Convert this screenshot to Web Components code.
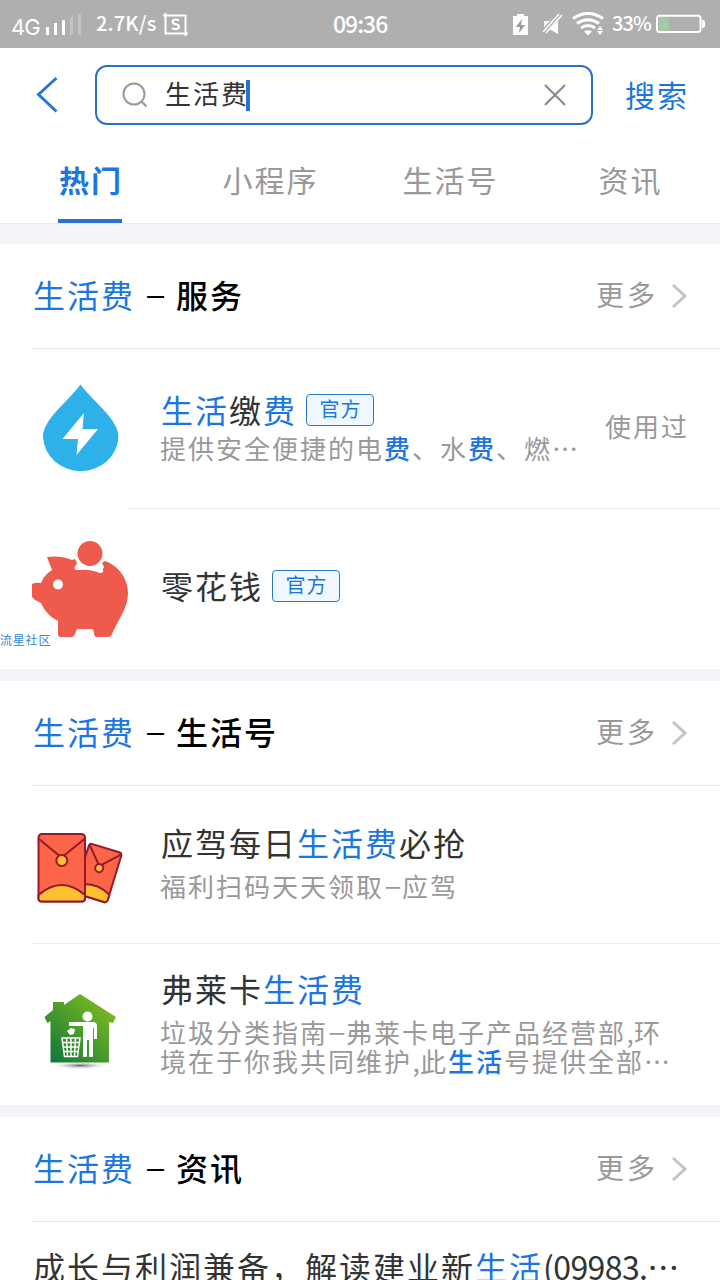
<!DOCTYPE html>
<html lang="zh-CN">
<head>
<meta charset="utf-8">
<title>生活费</title>
<style>
html,body{margin:0;height:1280px;overflow:hidden;background:#fff}
body{width:720px;font-family:"Noto Sans CJK SC",sans-serif;color:#333;--blue:#1b76e2}
</style>
</head>
<body>
<search-page></search-page>
<script>
const define = (name, html) => {
  const t = document.createElement('template');
  t.innerHTML = html;
  customElements.define(name, class extends HTMLElement {
    constructor() {
      super();
      this.attachShadow({mode: 'open'}).appendChild(t.content.cloneNode(true));
    }
  });
};

define('status-bar', `<style>
:host{display:flex;align-items:center;height:48px;background:#afafaf;color:#fff;box-sizing:border-box;white-space:nowrap;line-height:48px}
svg{display:block;flex:none}
.net{font:22px/48px Inter,sans-serif;width:28px;margin-left:11px;padding-top:3px;box-sizing:border-box;height:48px;letter-spacing:-1px}
.bars{margin-left:7px}
.speed{font:500 20px/46px "Noto Sans CJK SC",sans-serif;width:62px;margin-left:14px;height:48px;letter-spacing:.2px}
.shot{margin-left:5px}
.time{font:500 23px/46px "Noto Sans CJK SC",sans-serif;letter-spacing:-1px;margin-left:144px;width:56px;height:48px}
.bat{margin-left:123px}.mute{margin-left:13px}.wifi{margin-left:9px}
.pct{font:500 20px/46px "Noto Sans CJK SC",sans-serif;width:38px;margin-left:8px;height:48px;letter-spacing:-.9px}
.level{margin-left:6px}
</style>
<span class="net">4G</span>
<svg class="bars" width="36" height="48" fill="#fff"><path d="M0 27h3v8h-3zM8 23h3v12h-3zM16 20h3v15h-3z"/><path opacity=".25" d="M24 17h3v18h-3zM32 14h3v21h-3z"/></svg>
<span class="speed">2.7K/s</span>
<svg class="shot" width="26" height="48" fill="none" stroke="#fff" stroke-width="2"><path d="M0 15.500h22.500V36M2.500 13v20.500H25"/><path d="M16 20.500q-3.500-2-6 0-1.500 3 3 3.800 4.500 1.200 2.500 3.800-3 2-6.500 0" stroke-width="2.200"/></svg>
<span class="time">09:36</span>
<svg class="bat" width="18" height="48"><path fill="#fff" d="M1 16h4v-2h7v2h4v19H1z"/><path fill="#999" d="M10 19l-6 8h4l-1 6 6-8H9z"/></svg>
<svg class="mute" width="20" height="48"><path fill="#fff" d="M1 21h5l9-7v20l-9-5H1z"/><path stroke="#afafaf" stroke-width="6" d="M0 33L17 14"/><path stroke="#fff" stroke-width="1.600" d="M0 32L16 14M3 33L19 15"/></svg>
<svg class="wifi" width="32" height="48" fill="none" stroke="#fff" stroke-width="3"><path d="M1 18.500q15-10 30 0M5 23.500q11-7.500 22 0M9 28q7-5 14 0"/><path fill="#fff" stroke="none" d="M12 31.500q4-2.500 8 0l-4 4zM28 26l3 4h-6zM28 35l3-4h-6z"/></svg>
<span class="pct">33%</span>
<svg class="level" width="50" height="48"><rect x="3" y="17" width="10" height="14" fill="#a3c9a7"/><rect x="1" y="15.800" width="43.500" height="16.200" rx="2.500" fill="none" stroke="#fff" stroke-width="2"/><path fill="#fff" d="M46 20h1.500l1.500 1.500v5l-1.500 1.500H46z"/></svg>`);

define('search-header', `<style>
:host{display:flex;align-items:center;height:92px;padding:2px 0 0 35px;box-sizing:border-box}
svg{display:block;flex:none}
.back{margin-right:36px}
.box{display:flex;align-items:center;width:498px;height:60px;border:2px solid #2b70cb;border-radius:12px;box-sizing:border-box;padding:0 24px 0 25px}
.q{margin-left:16px;font-size:26px;letter-spacing:2px;line-height:54px;height:58px;color:#333}
.caret{width:4px;height:31px;background:#2b70cb;margin-left:-3px}
.clear{margin-left:auto}
.go{margin-left:32px;font-size:30px;letter-spacing:2px;color:var(--blue);padding-bottom:2px}
</style>
<svg class="back" width="24" height="40" fill="none" stroke="#2476d8" stroke-width="3"><path d="M21.500 3L3.500 19.500l18 17"/></svg>
<div class="box">
<svg width="27" height="30" fill="none" stroke="#999" stroke-width="2"><circle cx="12" cy="14" r="10.500"/><path d="M19.500 21.500l5 5"/></svg>
<span class="q">生活费</span><span class="caret"></span>
<svg class="clear" width="24" height="24" fill="none" stroke="#888" stroke-width="2"><path d="M2 2l20 20M22 2L2 22"/></svg>
</div>
<span class="go">搜索</span>`);

define('tab-item', `<style>
:host{display:flex;flex:1;justify-content:center;font-size:30px;letter-spacing:2px;color:#999}
span{box-sizing:border-box;height:83px;line-height:78px;border-bottom:4px solid transparent;text-indent:1px}
:host([active]){color:var(--blue);font-weight:700}
:host([active]) span{border-color:#2b70d2;width:64px;white-space:nowrap}
</style><span><slot></slot></span>`);

define('tab-bar', `<style>
:host{display:flex;height:83px;border-bottom:1px solid #e8eaed}
</style><slot></slot>`);

define('hit-text', `<style>:host{color:var(--blue);font-weight:var(--hw,400)}</style><slot></slot>`);

define('result-section', `<style>
:host{display:block}
.gap{height:var(--gap,12px);background:#f2f4f7}
header{display:flex;align-items:center;height:105px;margin-left:32px;box-sizing:border-box;border-bottom:1px solid #e8e8e8;padding-right:33px;color:#000}
.t{font-size:32px;letter-spacing:2px;font-weight:500;white-space:nowrap;padding-bottom:5px;margin-left:1px}
.dash{display:inline-block;width:41px;text-align:center;font-weight:400;letter-spacing:0;transform:translateY(-2px) scaleX(1.2)}
.more{margin-left:auto;font-size:28px;letter-spacing:3px;color:#999;margin-right:13px;padding-bottom:4px}
svg{display:block}
</style>
<div class="gap"></div>
<header><span class="t"><hit-text>生活费</hit-text><span class="dash">–</span><slot name="title"></slot></span>
<span class="more">更多</span>
<svg width="16" height="26" fill="none" stroke="#c4c4c8" stroke-width="3"><path d="M2 2l12 11L2 24"/></svg></header>
<slot></slot>`);

define('result-item', `<style>
:host{display:flex;align-items:center;height:var(--h);box-sizing:border-box;padding:0 32px}
.ic{width:96px;height:96px;flex:none;margin-right:32px;padding-top:var(--it,0)}
.main{display:flex;flex-direction:column;flex:1;min-width:0;white-space:nowrap;padding-bottom:7px}
.title{display:flex;align-items:center;font-size:32px;letter-spacing:2px;line-height:40px;height:42px}
.title slot::slotted(span){padding:0 0 2px 1px;margin-right:-1px}
.desc{font-size:26px;letter-spacing:2px;color:#999;line-height:29px;margin-top:var(--dt,0)}
.side{font-size:26px;letter-spacing:2px;color:#999;margin-right:-1px;padding-bottom:6px;flex:none}
</style>
<div class="ic"><slot name="icon"></slot></div>
<div class="main"><div class="title"><slot name="title"></slot></div><div class="desc"><slot name="desc"></slot></div></div>
<div class="side"><slot name="side"></slot></div>`);

define('row-rule', `<style>:host{display:block;height:1px;background:#ececec;margin-left:var(--in,32px)}</style>`);

define('official-badge', `<style>
:host{display:flex;align-items:center;justify-content:center;box-sizing:border-box;width:68px;height:32px;margin-left:10px;border:1px solid #2b7ac8;border-radius:4px;background:#eff8fe;color:var(--blue);font-size:20px;letter-spacing:1px;line-height:28px}
span{margin-right:-1px;padding-bottom:2px}
</style><span>官方</span>`);

define('fixed-glyph', `<style>:host{display:inline-block;width:var(--w,18px);text-align:center;letter-spacing:0}
:host([wide]){transform:translateY(-2px) scaleX(1.25)}</style><slot></slot>`);

define('drop-icon', `<style>:host,svg{display:block}</style>
<svg width="96" height="96" viewBox="32 381 96 96"><path fill="#2db1e8" d="M80.500 384.500C93 402 118.500 419 118.500 437a37.800 36 0 0 1-75.500 0C43 419 68 402 80.500 384.500z"/><path fill="#fff" d="M84 413L62.500 439H78l-1.500 16L98 429H82.500z"/></svg>`);

define('piggy-icon', `<style>:host,svg{display:block}</style>
<svg width="96" height="98" viewBox="32 541 96 98"><path fill="#ee5a4b" d="M47 557q14-2 25 3l3-1 2 4-2 7q14-2 26 3l3-6-2-4 3-2c14 5 23 18 23 32 0 15-9 25-16 41q-1 3-4 3H97q-3 0-3-4l-1-4H77l-2 5q-1 3-4 3H61q-3 0-3-3v-13q-12-6-17-18l-6-3-3-3v-13q4-2 9-1 3-8 11-13z"/><path fill="#fff" d="M76 565q4 2 7 1h10q6 0 10 4 1 3-3 3-11-5-24-3-3-2 0-5z"/><circle cx="90" cy="553.500" r="13.500" fill="#ee5a4b" stroke="#fff" stroke-width="2"/><circle cx="58" cy="584.500" r="5" fill="#fff"/></svg>`);

define('envelope-icon', `<style>:host,svg{display:block}</style>
<svg width="96" height="96" viewBox="32 821 96 96"><g stroke="#96182a" stroke-width="2" stroke-linejoin="round"><g transform="translate(90.500 844.500) rotate(17)"><rect width="34" height="52" x="-1" rx="3" fill="#fc6547"/><path d="M-1 43.500q17-9 34 0V49q0 3-3 3H2q-3 0-3-3z" fill="#fbc12e"/><path d="M0 2l15 17L32 2" fill="none"/><circle cx="15.500" cy="21" r="4" fill="#fbc12e"/></g><rect x="38.500" y="835" width="46.500" height="67.500" rx="3.500" fill="#fc6547"/><path d="M38.500 896q23-20 46.500 0v3.500q0 3-3 3H41.500q-3 0-3-3z" fill="#fbc12e"/><path d="M39 840l22.500 18.500L84.500 840" fill="none"/><circle cx="61.800" cy="861.500" r="5.500" fill="#fbc12e"/></g></svg>`);

define('house-icon', `<style>:host,svg{display:block}</style>
<svg width="96" height="96" viewBox="32 979 96 96"><defs><linearGradient id="g" x1="1" y1="0" x2="0" y2="1"><stop offset="0" stop-color="#8fc31f"/><stop offset=".5" stop-color="#4c9d2a"/><stop offset="1" stop-color="#08713d"/></linearGradient><radialGradient id="s"><stop offset="0" stop-color="#666"/><stop offset="1" stop-color="#fff" stop-opacity="0"/></radialGradient></defs>
<ellipse cx="80" cy="1065.500" rx="30" ry="4" fill="url(#s)"/><path fill="url(#g)" d="M53 1002h11v3l16-11 36 23-3 6-4-1v40.500H50.500V1021l-3 2-3-6 8.500-7z"/>
<g fill="#fff"><circle cx="87.500" cy="1016.500" r="5"/><path d="M69 1022h24q4 0 4 4v13h-3v-11h-1v29h-4v-17h-2v17h-4v-31H69z"/><path d="M71 1028l4 1-1 5-4 1-3-4z"/></g>
<path fill="none" stroke="#fff" stroke-width="1.500" d="M62 1038h18l-2.500 18.500h-13zM63 1042.500h16M63.500 1047h15M64 1051.500h14M66.500 1038l1 18M71 1038v18M75.500 1038l-1 18"/></svg>`);

define('community-mark', `<style>:host{position:absolute;left:0;top:631px;font-size:12px;letter-spacing:.8px;line-height:18px;color:#3287d8}</style>流星社区`);

define('headline-row', `<style>:host{display:block;height:80px;padding:20px 0 0 33px;font-size:32px;letter-spacing:2px;line-height:48px;white-space:nowrap}</style><slot></slot>`);

define('search-page', `<style>
:host{display:block;position:relative;width:720px;height:1280px;overflow:hidden}
</style>
<status-bar></status-bar>
<search-header></search-header>
<tab-bar><tab-item active>热门</tab-item><tab-item>小程序</tab-item><tab-item>生活号</tab-item><tab-item>资讯</tab-item></tab-bar>
<result-section style="--gap:20px"><span slot="title">服务</span>
<result-item style="--h:159px;--dt:2px"><drop-icon slot="icon"></drop-icon><span slot="title"><hit-text>生活</hit-text>缴<hit-text>费</hit-text></span><official-badge slot="title"></official-badge><span slot="desc">提供安全便捷的电<hit-text style="--hw:500">费</hit-text>、水<hit-text style="--hw:500">费</hit-text>、燃…</span><span slot="side">使用过</span></result-item>
<row-rule style="--in:128px"></row-rule>
<result-item style="--h:160px"><piggy-icon slot="icon"></piggy-icon><span slot="title">零花钱</span><official-badge slot="title"></official-badge></result-item>
</result-section>
<result-section><span slot="title">生活号</span>
<result-item style="--h:157px;--dt:7px;--it:7px"><envelope-icon slot="icon"></envelope-icon><span slot="title">应驾每日<hit-text>生活费</hit-text>必抢</span><span slot="desc">福利扫码天天领取<fixed-glyph wide>–</fixed-glyph>应驾</span></result-item>
<row-rule></row-rule>
<result-item style="--h:161px;--dt:7px;--it:5px"><house-icon slot="icon"></house-icon><span slot="title">弗莱卡<hit-text>生活费</hit-text></span><span slot="desc">垃圾分类指南<fixed-glyph wide>–</fixed-glyph>弗莱卡电子产品经营部<fixed-glyph style="--w:8px">,</fixed-glyph>环<br>境在于你我共同维护<fixed-glyph style="--w:8px">,</fixed-glyph>此<hit-text style="--hw:500">生活</hit-text>号提供全部…</span></result-item>
</result-section>
<result-section><span slot="title">资讯</span>
<headline-row>成长与利润兼备，解读建业新<hit-text>生活</hit-text><span style="letter-spacing:-.6px">(09983.</span>…</headline-row>
</result-section>
<community-mark></community-mark>`);
</script>
</body>
</html>
